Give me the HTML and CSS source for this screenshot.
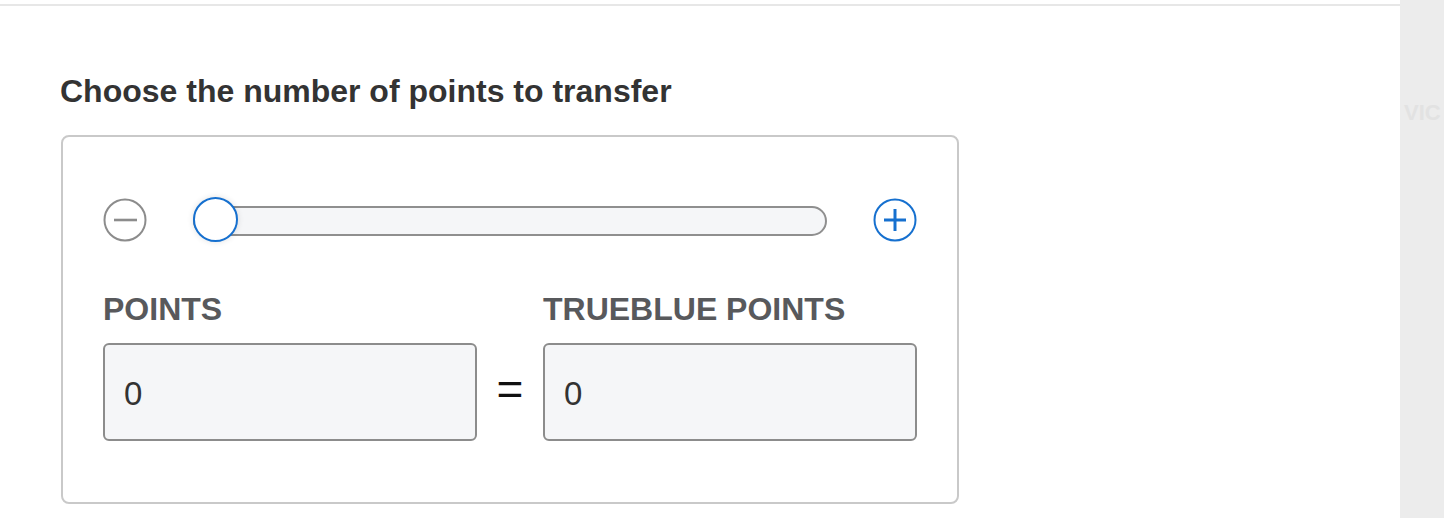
FILE: index.html
```html
<!DOCTYPE html>
<html>
<head>
<meta charset="utf-8">
<link rel="stylesheet" href="styles.css">
</head>
<body>
<div class="page">
  <main class="main">
    <div class="topline"></div>
    <section class="content">
      <h2 class="title">Choose the number of points to transfer</h2>
      <div class="card">
        <div class="slider-row">
          <button class="step minus" aria-label="decrease">
            <svg width="44" height="44" viewBox="0 0 44 44"><circle cx="22" cy="22" r="20.5" fill="none" stroke="#8c8c8c" stroke-width="2"/><line x1="11" y1="22" x2="34" y2="22" stroke="#8c8c8c" stroke-width="2.6"/></svg>
          </button>
          <div class="slider">
            <div class="track"></div>
            <div class="thumb"></div>
          </div>
          <button class="step plus" aria-label="increase">
            <svg width="44" height="44" viewBox="0 0 44 44"><circle cx="22" cy="22" r="20.5" fill="none" stroke="#1670cf" stroke-width="2"/><line x1="11" y1="22" x2="33" y2="22" stroke="#1670cf" stroke-width="3"/><line x1="22" y1="11" x2="22" y2="33" stroke="#1670cf" stroke-width="3"/></svg>
          </button>
        </div>
        <div class="fields">
          <div class="field">
            <div class="label">POINTS</div>
            <div class="input">0</div>
          </div>
          <div class="equals">=</div>
          <div class="field">
            <div class="label">TRUEBLUE POINTS</div>
            <div class="input">0</div>
          </div>
        </div>
      </div>
    </section>
  </main>
  <aside class="side">
    <span class="mark">VIC</span>
  </aside>
</div>
</body>
</html>
```
FILE: styles.css
```css
html, body {
  margin: 0;
  padding: 0;
  background: #ffffff;
}
body {
  font-family: "Liberation Sans", Arial, Helvetica, sans-serif;
  width: 1444px;
  height: 518px;
  overflow: hidden;
}
.page {
  display: flex;
  width: 1444px;
  height: 518px;
}
.main {
  width: 1400px;
  flex: none;
}
.topline {
  height: 2px;
  margin-top: 4px;
  background: #e7e7e7;
}
.content {
  padding-left: 60px;
}
.title {
  margin: 67px 0 26px 0;
  font-size: 32px;
  line-height: 36px;
  font-weight: bold;
  color: #333333;
}
.card {
  width: 814px;
  margin-left: 1px;
  border: 2px solid #c9c9c9;
  border-radius: 8px;
  padding: 59px 40px 61px 40px;
}
.slider-row {
  display: flex;
  align-items: center;
  gap: 46px;
  height: 48px;
}
.step {
  width: 44px;
  height: 44px;
  padding: 0;
  border: 0;
  background: none;
  display: flex;
  flex: none;
}
.slider {
  flex: 1;
  height: 48px;
  position: relative;
  display: flex;
  align-items: center;
}
.track {
  width: 100%;
  height: 30px;
  box-sizing: border-box;
  border: 2px solid #8f8f8f;
  border-radius: 15px;
  background: #f5f6f8;
  margin-top: 2px;
}
.thumb {
  position: absolute;
  left: 0;
  top: 1px;
  width: 45px;
  height: 45px;
  box-sizing: border-box;
  border: 2.5px solid #1670cf;
  border-radius: 50%;
  background: #ffffff;
  box-shadow: 0 0 6px rgba(0, 0, 0, 0.12);
}
.fields {
  display: flex;
  margin-top: 47px;
}
.field {
  width: 374px;
  display: flex;
  flex-direction: column;
}
.label {
  font-size: 32px;
  line-height: 36px;
  font-weight: bold;
  color: #58595c;
}
.input {
  margin-top: 16px;
  height: 98px;
  box-sizing: border-box;
  border: 2px solid #8c8c8c;
  border-radius: 6px;
  background: #f5f6f8;
  padding-left: 19px;
  display: flex;
  align-items: center;
  font-size: 33px;
  color: #333333;
  padding-top: 4px;
}
.equals {
  width: 66px;
  display: flex;
  justify-content: center;
  align-items: center;
  padding-top: 46px;
  font-size: 46px;
  font-weight: normal;
  color: #111111;
}
.side {
  flex: 1;
  background: #ececec;
  overflow: hidden;
  position: relative;
}
.mark {
  position: absolute;
  left: 4px;
  top: 100px;
  font-size: 22px;
  font-weight: bold;
  color: #e2e2e2;
}
```
